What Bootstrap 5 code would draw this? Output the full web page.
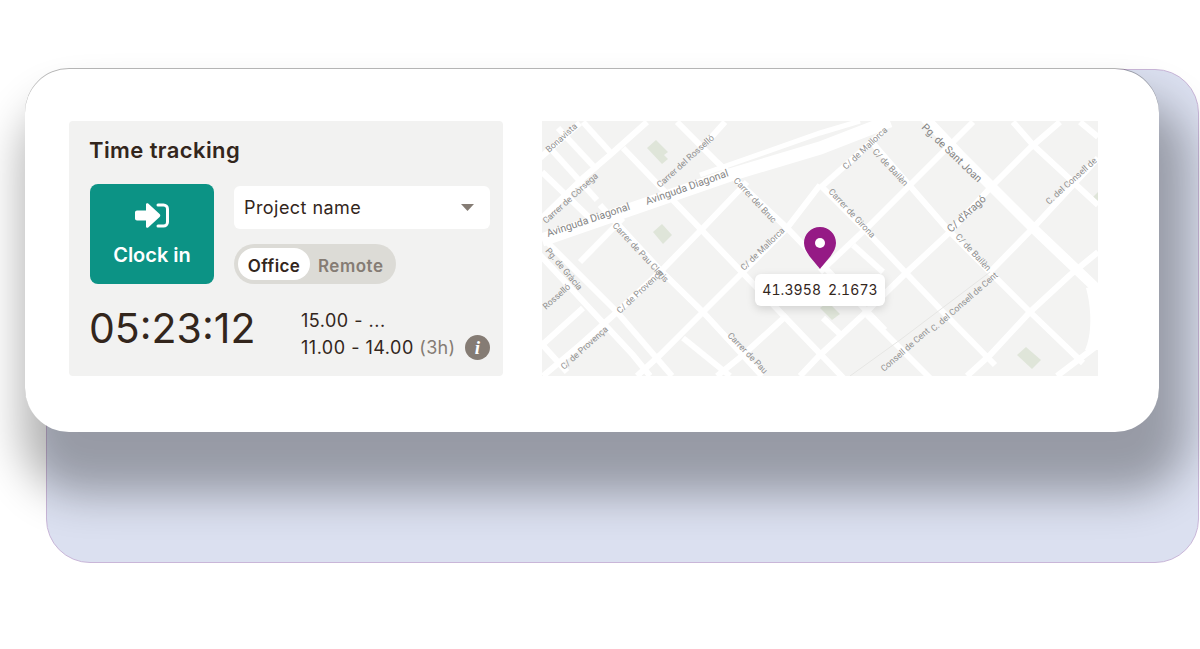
<!DOCTYPE html>
<html>
<head>
  <title>Time tracking</title>
  <meta charset="UTF-8">
  <meta name="viewport" content="width=device-width, initial-scale=1.0">
  <link href="https://cdn.jsdelivr.net/npm/bootstrap@5.3.0/dist/css/bootstrap.min.css" rel="stylesheet">
  <style>
    html, body { height: 100%; overflow: hidden; }
    body { background: #fff; font-family: "Inter", "Liberation Sans", sans-serif; color: #33261c; }
    .stage { padding: 69px 0 0 46px; }
    .back-panel {
      width: 1153px; height: 494px; background: #dbe0f0;
      border: 1px solid #c9b6d8; border-radius: 44px;
    }
    .front-card {
      width: 1134px; height: 363px; margin: -1px 0 0 -22px; background: #fff; border-radius: 44px;
      padding: 52px 61px 0 44px; gap: 39px;
      box-shadow: 0 -1px 0 0 rgba(0,0,0,.28), 13px 46px 44px 16px rgba(0,0,0,.31);
    }
    .track-panel { width: 434px; height: 255px; background: #f2f2f1; border-radius: 4px; padding: 16px 13px 0 21px; }
    .track-title { font-size: 22px; font-weight: 600; line-height: 26px; margin: 0 0 21px -1px; letter-spacing: .4px; }
    .clock-row { gap: 20px; }
    .clock-btn {
      width: 124px; height: 100px; background: #0c9385; border: 0; border-radius: 8px; color: #fff;
      font-size: 20px; font-weight: 600; padding: 0; line-height: 22px;
    }
    .clock-btn svg { display: block; margin: 0 auto 16px; }
    .clock-btn:hover { background: #0c9385; color: #fff; }
    .project-select { height: 43px; margin-top: 2px; background: #fff; border-radius: 6px; padding: 0 16px 0 10px; font-size: 18px; letter-spacing: .45px; }
    .mode-toggle { width: 162px; height: 40px; margin-top: 15px; background: #dcdbd6; border-radius: 20px; padding: 4px; font-size: 17px; font-weight: 600; }
    .mode-on { width: 72px; height: 32px; background: #fff; border-radius: 16px; line-height: 37px; text-align: center; letter-spacing: .4px; }
    .mode-off { color: #857c74; padding-left: 8px; line-height: 37px; letter-spacing: .5px; }
    .timer-text { width: 212px; margin: 19px 0 0 -1px; font-size: 41px; line-height: 50px; }
    .time-rows { font-size: 18px; line-height: 27px; margin-top: 23px; letter-spacing: .5px; white-space: nowrap; }
    .time-muted { color: #857c74; letter-spacing: .25px; }
    .info-dot {
      width: 25px; height: 25px; border-radius: 50%; background: #857c74; color: #fff; letter-spacing: 0;
      font-family: "Liberation Serif", serif; font-style: italic; font-weight: 700; font-size: 19px; line-height: 25px; text-align: center;
    }
    .map-box { width: 556px; height: 255px; background: #f3f3f2; overflow: hidden; }
    .map-box svg.map-svg { display: block; }
    .map-label { font-family: "Roboto", sans-serif; font-size: 8.800px; fill: #909090; }
    .map-label-big { font-family: "Roboto", sans-serif; font-size: 10.500px; fill: #858585; }
    .map-pin { position: absolute; left: 262px; top: 106px; }
    .map-tip {
      position: absolute; left: 213px; top: 153px; width: 130px; height: 32px; background: #fff; border-radius: 6px;
      font-size: 14px; line-height: 32px; text-align: center; letter-spacing: .1px; word-spacing: 3px; font-variant-numeric: tabular-nums;
      box-shadow: 0 3px 10px rgba(0,0,0,.14);
    }
  </style>
</head>
<body>
  <div class="stage">
    <div class="back-panel">
      <div class="front-card d-flex">

        <!-- Time tracking -->
        <div class="track-panel flex-shrink-0">
          <h2 class="track-title">Time tracking</h2>
          <div class="d-flex clock-row">
            <button type="button" class="btn clock-btn flex-shrink-0">
              <svg width="34" height="25" viewBox="0 0 34 25">
                <path fill="#fff" d="M2 7.500h9V1.600c0-1.200 1.300-1.800 2.200-1L24.600 11c.9.800.9 2.200 0 3L13.200 24.400c-.9.800-2.200.200-2.200-1v-5.900H2c-1.100 0-2-.9-2-2v-6c0-1.100.9-2 2-2z"/>
                <path fill="none" stroke="#fff" stroke-width="3" stroke-linecap="round" d="M23 2h5.500a4 4 0 0 1 4 4v13a4 4 0 0 1-4 4H23"/>
              </svg>
              Clock in
            </button>
            <div class="flex-grow-1">
              <div class="project-select d-flex align-items-center justify-content-between">
                <span>Project name</span>
                <svg width="13" height="7" viewBox="0 0 13 7"><path fill="#857c74" d="M0 0h13L6.500 7z"/></svg>
              </div>
              <div class="mode-toggle d-flex">
                <div class="mode-on">Office</div>
                <div class="mode-off">Remote</div>
              </div>
            </div>
          </div>
          <div class="d-flex">
            <div class="timer-text flex-shrink-0">05:23:12</div>
            <div class="time-rows flex-grow-1">
              <div>15.00 - ...</div>
              <div class="d-flex align-items-center justify-content-between"><span>11.00 - 14.00 <span class="time-muted">(3h)</span></span><span class="info-dot">i</span></div>
            </div>
          </div>
        </div>

        <!-- Map -->
        <div class="map-box position-relative flex-shrink-0">
          <svg class="map-svg" width="556" height="255" viewBox="542 121 556 255">
            <g fill="#dfe5d9">
              <path d="M647 148l9-8 12 12-4 3 4 4-6 5-15-16z"/>
              <path d="M653 232l9-8 10 11-9 9z"/>
              <path d="M820 308l8-6 12 12-8 6z"/>
              <path d="M1017 355l9-8 15 13-9 9z"/>
              <path d="M1092 198l6-6v10l-3 2z"/>
            </g>
            <g fill="none" stroke="#fff" stroke-width="6">
              <!-- down-right streets -->
              <path d="M583 122L610 152"/>
              <path d="M558 128L597 170"/>
              <path d="M550 148L597 200"/>
              <path d="M542 172L597 225"/>
              <path d="M623 148L850 385"/>
              <path d="M677 122L717 162L787 228L885 330"/>
              <path d="M820 185L870 235L943 312L995 365"/>
              <path d="M870 140L950 232L1030 312L1083 363"/>
              <path d="M1013 122L1033 145L1098 205"/>
              <path d="M1080 122L1098 137"/>
              <path d="M853 245L883 272"/>
              <path d="M867 315L930 378"/>
              <path d="M823 318L843 337"/>
              <path d="M600 205L662 272L703 312L762 376"/>
              <path d="M547 242L617 312L672 376"/>
              <path d="M540 255L633 355L650 376"/>
              <path d="M683 338L730 376"/>
              <path d="M540 342L567 372"/>
              <!-- up-right streets -->
              <path d="M647 122L610 155L583 178L542 218"/>
              <path d="M580 123L540 158"/>
              <path d="M725 122L707 142"/>
              <path d="M747 182L703 228L660 272L617 312L580 345L543 376"/>
              <path d="M623 218L580 262"/>
              <path d="M583 308L542 345"/>
              <path d="M820 185L787 228L743 272L703 312L660 355L637 376"/>
              <path d="M787 315L743 355L717 376"/>
              <path d="M973 122L907 188L870 225L820 272"/>
              <path d="M883 132L820 188"/>
              <path d="M1060 122L1030 148L990 188L950 232L907 272L863 315L820 355L800 376"/>
              <path d="M1098 158L1033 228L990 272"/>
              <path d="M1098 252L1070 275L1030 312L990 355L967 376"/>
              <path d="M1098 345L1057 376"/>
            </g>
            <!-- wide avenues -->
            <path d="M542 240L730 175L820 148L890 121" fill="none" stroke="#fff" stroke-width="13"/>
            <path d="M700 175L820 133L860 121" fill="none" stroke="#fff" stroke-width="5"/>
            <path d="M925 118L960 155L990 185L1033 228L1098 290" fill="none" stroke="#fff" stroke-width="10"/>
            <path d="M1086 288C1092 310 1092 335 1085 350L1098 350L1098 285Z" fill="#fff"/>
            <path d="M990 272L900 340L850 376" fill="none" stroke="#e6e6e4" stroke-width="1"/>
            <!-- street names -->
            <g class="map-label">
              <text transform="translate(549 153) rotate(-42)">Bonavista</text>
              <text transform="translate(546 224) rotate(-42)">Carrer de Còrsega</text>
              <text transform="translate(660 188) rotate(-42)">Carrer del Rosselló</text>
              <text transform="translate(733 181) rotate(47)">Carrer del Bruc</text>
              <text transform="translate(612 226) rotate(47)">Carrer de Pau Claris</text>
              <text transform="translate(545 251) rotate(50)">Pg. de Gràcia</text>
              <text transform="translate(620 314) rotate(-43)">C/ de Provença</text>
              <text transform="translate(564 370) rotate(-42)">C/ de Provença</text>
              <text transform="translate(744 271) rotate(-44)">C/ de Mallorca</text>
              <text transform="translate(727 336) rotate(46)">Carrer de Pau</text>
              <text transform="translate(546 310) rotate(-42)">Rosselló</text>
              <text transform="translate(846 170) rotate(-43)">C/ de Mallorca</text>
              <text transform="translate(872 152) rotate(47)">C/ de Bailèn</text>
              <text transform="translate(828 192) rotate(47)">Carrer de Girona</text>
              <text transform="translate(955 237) rotate(47)">C/ de Bailèn</text>
              <text transform="translate(1049 205) rotate(-42)">C. del Consell de</text>
              <text transform="translate(934 332) rotate(-41)">C. del Consell de Cent</text>
              <text transform="translate(884 372) rotate(-41)">Consell de Cent</text>
            </g>
            <g class="map-label-big">
              <text transform="translate(548 237) rotate(-18.500)">Avinguda Diagonal</text>
              <text transform="translate(647 205) rotate(-19.500)">Avinguda Diagonal</text>
              <text transform="translate(921 128) rotate(44)">Pg. de Sant Joan</text>
              <text transform="translate(951 233) rotate(-43)">C/ d'Aragó</text>
            </g>
          </svg>
          <svg class="map-pin" width="32" height="42" viewBox="0 0 32 42">
            <path fill="#951a85" d="M16 0C7 0 0 7 0 16c0 10 12 20 16 26 4-6 16-16 16-26C32 7 25 0 16 0z"/>
            <circle cx="16" cy="16" r="5" fill="#fff"/>
          </svg>
          <div class="map-tip">41.3958 2.1673</div>
        </div>

      </div>
    </div>
  </div>
</body>
</html>
